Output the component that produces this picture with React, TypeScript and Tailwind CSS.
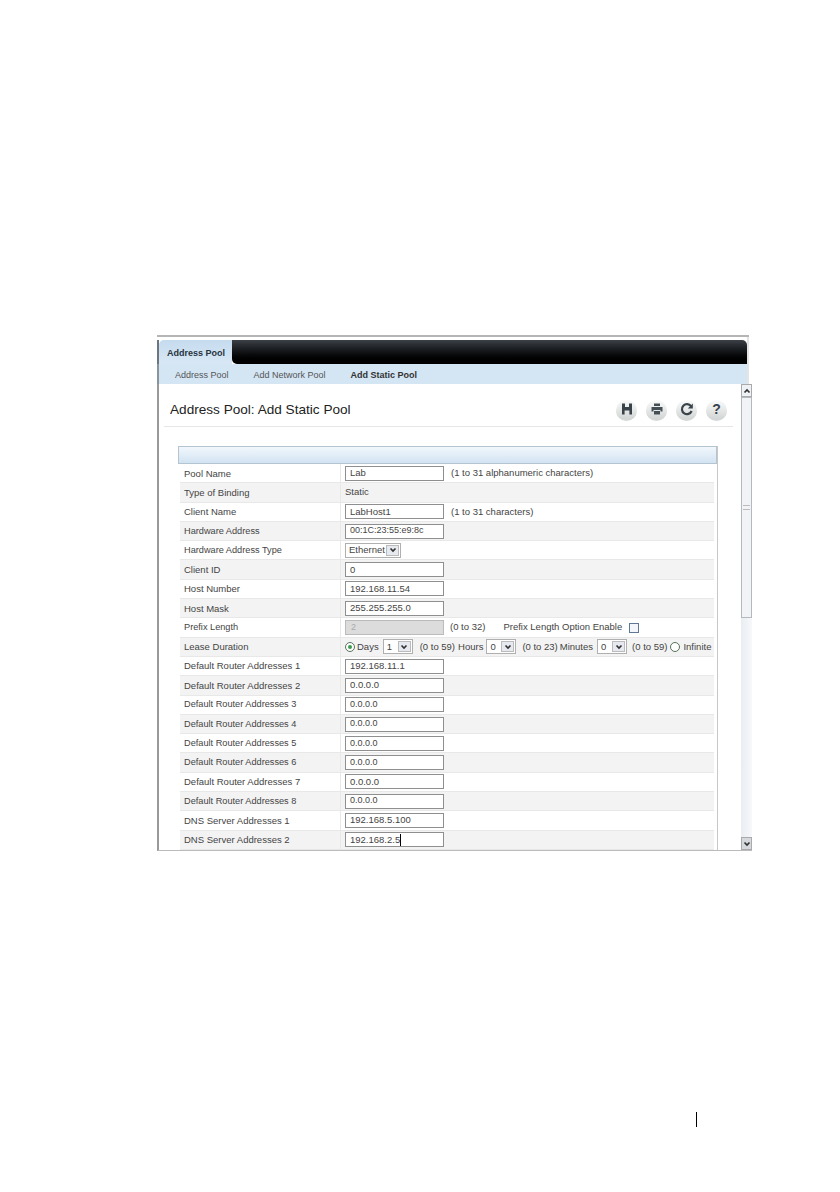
import React from "react";

type Row = { label: string; value?: string; kind?: string; note?: string; small?: boolean };

const rows: Row[] = [
  { label: "Pool Name", value: "Lab", note: "(1 to 31 alphanumeric characters)" },
  { label: "Type of Binding", kind: "static" },
  { label: "Client Name", value: "LabHost1", note: "(1 to 31 characters)" },
  { label: "Hardware Address", value: "00:1C:23:55:e9:8c", small: true },
  { label: "Hardware Address Type", kind: "select", small: true },
  { label: "Client ID", value: "0" },
  { label: "Host Number", value: "192.168.11.54" },
  { label: "Host Mask", value: "255.255.255.0" },
  { label: "Prefix Length", kind: "prefix", small: true },
  { label: "Lease Duration", kind: "lease" },
  { label: "Default Router Addresses 1", value: "192.168.11.1" },
  { label: "Default Router Addresses 2", value: "0.0.0.0" },
  { label: "Default Router Addresses 3", value: "0.0.0.0", small: true },
  { label: "Default Router Addresses 4", value: "0.0.0.0", small: true },
  { label: "Default Router Addresses 5", value: "0.0.0.0", small: true },
  { label: "Default Router Addresses 6", value: "0.0.0.0", small: true },
  { label: "Default Router Addresses 7", value: "0.0.0.0" },
  { label: "Default Router Addresses 8", value: "0.0.0.0", small: true },
  { label: "DNS Server Addresses 1", value: "192.168.5.100" },
  { label: "DNS Server Addresses 2", value: "192.168.2.5" },
];

const Arrow = ({ up }: { up?: boolean }) => (
  <svg width="8" height="6" viewBox="0 0 8 6" className={up ? "rotate-180" : ""}>
    <path d="M1.5 1.5 L4 4 L6.5 1.5" fill="none" stroke="#333" strokeWidth="1.7" />
  </svg>
);

const Select = ({ value, w }: { value: string; w: string }) => (
  <span className={`flex h-[15px] items-center justify-between border border-[#b0b0b0] bg-white pl-[3px] pr-px text-[9.5px] text-[#444] ${w}`}>
    {value}
    <span className="flex h-[11px] w-[13px] items-center justify-center border border-[#bbb] bg-[#e6eaf0]">
      <Arrow />
    </span>
  </span>
);

const Radio = ({ on }: { on?: boolean }) => (
  <span className="flex h-[10px] w-[10px] items-center justify-center rounded-full border border-[#56735c] bg-white">
    {on && <span className="h-[4px] w-[4px] rounded-full bg-[#3d9b4c]" />}
  </span>
);

const Note = ({ children }: { children: React.ReactNode }) => (
  <span className="whitespace-nowrap text-[9.5px] text-[#444]">{children}</span>
);

const Value = ({ row }: { row: Row }) => {
  if (row.kind === "static") return <span className="text-[9.5px] text-[#444]">Static</span>;
  if (row.kind === "select") return <Select value="Ethernet" w="w-[56px]" />;
  if (row.kind === "prefix")
    return (
      <span className="flex items-center">
        <span className="flex h-[15px] w-[99px] items-center border border-[#bbb] bg-[#dcdcdc] pl-[5px] text-[9px] text-[#aaa]">2</span>
        <span className="ml-[6px] flex"><Note>(0 to 32)</Note></span>
        <span className="ml-[18px] text-[9.5px] text-[#444]">Prefix Length Option Enable</span>
        <span className="ml-[7px] h-[10px] w-[10px] border border-[#5f7894] bg-[#f4f7fa]" />
      </span>
    );
  if (row.kind === "lease")
    return (
      <span className="flex items-center">
        <Radio on />
        <span className="ml-[2px] text-[9.5px] text-[#444]">Days</span>
        <span className="ml-[4px]"><Select value="1" w="w-[30px]" /></span>
        <span className="ml-[7px] flex"><Note>(0 to 59)</Note></span>
        <span className="ml-[3px] text-[9.5px] text-[#444]">Hours</span>
        <span className="ml-[3px]"><Select value="0" w="w-[30px]" /></span>
        <span className="ml-[6px] flex"><Note>(0 to 23)</Note></span>
        <span className="ml-[2px] text-[9.5px] text-[#444]">Minutes</span>
        <span className="ml-[4px]"><Select value="0" w="w-[30px]" /></span>
        <span className="ml-[5px] flex"><Note>(0 to 59)</Note></span>
        <span className="ml-[3px]"><Radio /></span>
        <span className="ml-[3px] text-[9.5px] text-[#444]">Infinite</span>
      </span>
    );
  return (
    <span className="flex items-center">
      <span className={`flex h-[15px] w-[99px] items-center border border-[#8f8f8f] bg-white pl-[4px] text-[#444] ${row.small ? "text-[9px]" : "text-[9.5px]"}`}>
        {row.value}
        {row.value === "192.168.2.5" && <span className="h-[12px] w-px bg-black" />}
      </span>
      {row.note && <span className="ml-[7px] flex"><Note>{row.note}</Note></span>}
    </span>
  );
};

const Round = ({ children }: { children: React.ReactNode }) => (
  <span className="flex h-[21px] w-[21px] items-center justify-center rounded-full border-b-2 border-[#d4d7d7] bg-gradient-to-b from-[#fbfbfb] to-[#d3d6d6]">
    {children}
  </span>
);

const tools = [
  <path key="s" d="M3 2.5h10v11h-2.6V9.5H5.6v4H3zM6 2.5h4v3.5H6z" fill="#39434a" fillRule="evenodd" />,
  <path key="p" d="M5 2.5h6v2.5H5zM2.5 6h11v4.5h-2V9h-7v1.5h-2zM5 10h6v3.5H5z" fill="#444e55" />,
  <g key="r">
    <path d="M12 5.2A5 5 0 1 0 12.6 10" fill="none" stroke="#39434a" strokeWidth="2.2" />
    <path d="M13.8 2.5v5h-5z" fill="#39434a" />
  </g>,
];

export default function App() {
  return (
    <div className="flex h-[1192px] w-[840px] flex-col overflow-hidden bg-white pl-[157px] pt-[335px] font-['Liberation_Sans',sans-serif]">
      <div className="flex h-[516px] w-[595px] flex-col">
        <div className="h-[2px] w-[592px] bg-[#b5b5b5]" />
        <div className="flex w-[592px] flex-col border-r-2 border-r-[#e4e4e4] pt-[3px]">
          {/* tab strip */}
          <div className="flex h-[24px] border-l-2 border-l-[#6d7680]">
            <div className="flex w-[73px] items-center rounded-tl-[5px] bg-gradient-to-b from-[#c5dbee] to-[#d8e7f5] pl-[8px] pt-[3px] text-[9px] font-bold text-[#27343f]">
              Address Pool
            </div>
            <div className="flex-1 rounded-tr-[5px] rounded-bl-[5px] bg-gradient-to-b from-[#3c4147] to-[#000000]" />
          </div>
          <div className="flex h-[20px] items-center gap-[25px] border-l-2 border-l-[#8a949e] bg-[#d4e5f4] pl-[16px] pt-[3px] text-[9px] text-[#555]">
            <span>Address Pool</span>
            <span>Add Network Pool</span>
            <span className="font-bold text-[#333]">Add Static Pool</span>
          </div>
        </div>
        {/* page body */}
        <div className="flex min-h-0 flex-1 border-b border-l-2 border-b-[#bbb] border-l-[#9a9a9a]">
          <div className="flex w-[582px] flex-col pl-[5px]">
            <div className="flex h-[43px] w-[569px] items-center justify-between border-b border-[#e6e6e6] pl-[6px] pr-[6px]">
              <span className="mt-[10px] text-[13.6px] text-[#222]">Address Pool: Add Static Pool</span>
              <span className="mt-[10px] flex gap-[9px]">
                {tools.map((icon, i) => (
                  <Round key={i}>
                    <svg width="16" height="16" viewBox="0 0 16 16">{icon}</svg>
                  </Round>
                ))}
                <Round><span className="text-[14px] font-bold leading-none text-[#39434a]">?</span></Round>
              </span>
            </div>
            <div className="ml-[14px] mt-[19px] flex w-[540px] flex-col border-r border-r-[#c8c8c8]">
              <div className="h-[18px] border border-[#b4c4d0] bg-gradient-to-b from-[#f1f7fc] to-[#d2e3f2]" />
              {rows.map((row, i) => (
                <div
                  key={row.label}
                  className={`ml-[2px] mr-[3px] flex h-[19.3px] items-center border-b border-[#e8e8e8] ${i % 2 ? "bg-[#f3f3f3]" : "bg-white"}`}
                >
                  <span className={`w-[160px] shrink-0 pl-[4px] pt-px text-[#444] ${row.small ? "text-[9.2px]" : "text-[9.5px]"}`}>
                    {row.label}
                  </span>
                  <span className="flex h-full flex-1 items-center border-l border-[#e8e8e8] pl-[4px]">
                    <Value row={row} />
                  </span>
                </div>
              ))}
            </div>
          </div>
          {/* scrollbar */}
          <div className="flex w-[11px] flex-col bg-gradient-to-r from-[#e9edf2] to-[#f7f8fa]">
            <span className="flex h-[13px] items-center justify-center border border-[#aaa] bg-[#eef1f5]"><Arrow up /></span>
            <span className="flex h-[221px] items-center justify-center border border-[#b4b9c0] bg-[#f1f3f6]">
              <span className="h-[5px] w-[7px] border-y border-[#bbb]" />
            </span>
            <span className="flex-1" />
            <span className="flex h-[13px] items-center justify-center border border-[#aaa] bg-[#d5d8dc]"><Arrow /></span>
          </div>
        </div>
      </div>
      <div className="ml-[539px] mt-[261px] h-[15px] w-px bg-black" />
    </div>
  );
}
